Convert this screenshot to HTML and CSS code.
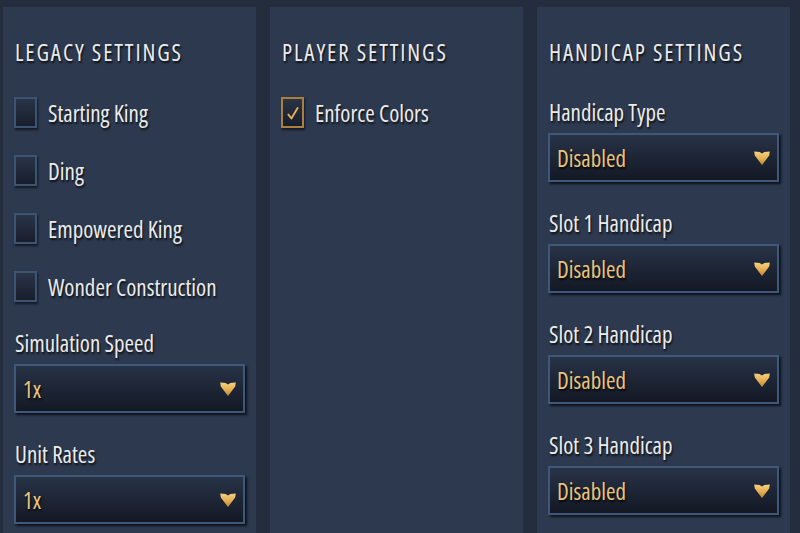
FILE: index.html
```html
<!DOCTYPE html>
<html>
<head>
<meta charset="utf-8">
<link rel="stylesheet" href="styles.css">
</head>
<body>
<svg class="defs" width="0" height="0" aria-hidden="true"><defs><linearGradient id="g1" x1="0" y1="0" x2="0" y2="1"><stop offset="0" stop-color="#f7d07c"/><stop offset="0.55" stop-color="#e2ad52"/><stop offset="1" stop-color="#c08634"/></linearGradient></defs></svg>
<div class="screen">
  <section class="panel">
    <h2 class="panel-title">LEGACY SETTINGS</h2>
    <div class="options">
      <div class="check"><span class="box"></span><span class="check-label">Starting King</span></div>
      <div class="check"><span class="box"></span><span class="check-label">Ding</span></div>
      <div class="check"><span class="box"></span><span class="check-label">Empowered King</span></div>
      <div class="check"><span class="box"></span><span class="check-label">Wonder Construction</span></div>
    </div>
    <div class="fields after-options">
      <div class="field">
        <div class="field-label">Simulation Speed</div>
        <div class="select"><span class="select-value">1x</span><svg class="arrow" viewBox="0 0 16 14"><path d="M0.2 0.6 L5.6 1.1 L8 2.6 L10.4 1.1 L15.8 0.6 L15.2 4.6 L8 14 L0.8 4.6 Z" fill="url(#g1)"/></svg></div>
      </div>
      <div class="field">
        <div class="field-label">Unit Rates</div>
        <div class="select"><span class="select-value">1x</span><svg class="arrow" viewBox="0 0 16 14"><path d="M0.2 0.6 L5.6 1.1 L8 2.6 L10.4 1.1 L15.8 0.6 L15.2 4.6 L8 14 L0.8 4.6 Z" fill="url(#g1)"/></svg></div>
      </div>
    </div>
  </section>

  <section class="panel">
    <h2 class="panel-title">PLAYER SETTINGS</h2>
    <div class="options">
      <div class="check"><span class="box checked"><svg class="tick" viewBox="0 0 12 14"><path d="M1.4 8.6 L4.4 12.4 L10.6 2" fill="none" stroke="#e3ae55" stroke-width="1.9" stroke-linecap="round" stroke-linejoin="round"/></svg></span><span class="check-label">Enforce Colors</span></div>
    </div>
  </section>

  <section class="panel">
    <h2 class="panel-title">HANDICAP SETTINGS</h2>
    <div class="fields">
      <div class="field">
        <div class="field-label">Handicap Type</div>
        <div class="select"><span class="select-value">Disabled</span><svg class="arrow" viewBox="0 0 16 14"><path d="M0.2 0.6 L5.6 1.1 L8 2.6 L10.4 1.1 L15.8 0.6 L15.2 4.6 L8 14 L0.8 4.6 Z" fill="url(#g1)"/></svg></div>
      </div>
      <div class="field">
        <div class="field-label">Slot 1 Handicap</div>
        <div class="select"><span class="select-value">Disabled</span><svg class="arrow" viewBox="0 0 16 14"><path d="M0.2 0.6 L5.6 1.1 L8 2.6 L10.4 1.1 L15.8 0.6 L15.2 4.6 L8 14 L0.8 4.6 Z" fill="url(#g1)"/></svg></div>
      </div>
      <div class="field">
        <div class="field-label">Slot 2 Handicap</div>
        <div class="select"><span class="select-value">Disabled</span><svg class="arrow" viewBox="0 0 16 14"><path d="M0.2 0.6 L5.6 1.1 L8 2.6 L10.4 1.1 L15.8 0.6 L15.2 4.6 L8 14 L0.8 4.6 Z" fill="url(#g1)"/></svg></div>
      </div>
      <div class="field">
        <div class="field-label">Slot 3 Handicap</div>
        <div class="select"><span class="select-value">Disabled</span><svg class="arrow" viewBox="0 0 16 14"><path d="M0.2 0.6 L5.6 1.1 L8 2.6 L10.4 1.1 L15.8 0.6 L15.2 4.6 L8 14 L0.8 4.6 Z" fill="url(#g1)"/></svg></div>
      </div>
    </div>
  </section>
</div>
</body>
</html>
```
FILE: styles.css
```css
html, body {
  margin: 0;
  height: 100%;
  overflow: hidden;
}
body {
  background: #232d3e;
  font-family: "Open Sans", "DejaVu Sans", sans-serif;
  font-stretch: 77%;
  font-size: 23px;
  color: #ebebeb;
}
.defs {
  position: absolute;
  width: 0;
  height: 0;
}
.screen {
  display: flex;
  gap: 14px;
  padding: 7px 0 0 3px;
  height: 100%;
  box-sizing: border-box;
}
.panel {
  width: 253px;
  flex: none;
  background: #2c394e;
  padding: 30px 11px 0;
  box-sizing: border-box;
}
.panel-title {
  margin: 0 0 30px 1px;
  font-size: 23px;
  font-weight: 400;
  line-height: 30px;
  letter-spacing: 1.9px;
  white-space: nowrap;
  text-shadow: 1px 2px 2px rgba(0, 0, 0, 0.75);
}
.options {
  display: flex;
  flex-direction: column;
  gap: 27px;
}
.check {
  display: flex;
  align-items: center;
  gap: 11px;
  height: 31px;
}
.box {
  width: 23px;
  height: 31px;
  box-sizing: border-box;
  border: 2px solid #3d5372;
  background: linear-gradient(#2a3448, #171d2b);
  box-shadow: 1px 2px 2px rgba(8, 12, 20, 0.7);
  display: flex;
  align-items: center;
  justify-content: center;
  flex: none;
}
.box.checked {
  border-color: #a98040;
}
.tick {
  width: 12px;
  height: 14px;
  margin-top: 1px;
}
.check-label {
  line-height: 30px;
  white-space: nowrap;
  text-shadow: 1px 2px 2px rgba(0, 0, 0, 0.75);
}
.fields {
  display: flex;
  flex-direction: column;
  gap: 26px;
}
.fields.after-options {
  margin-top: 26px;
}
.field-label {
  line-height: 30px;
  margin: 0 0 6px 1px;
  white-space: nowrap;
  text-shadow: 1px 2px 2px rgba(0, 0, 0, 0.75);
}
.select {
  height: 49px;
  box-sizing: border-box;
  border: 2px solid #3f5778;
  background: linear-gradient(#283347, #131824);
  box-shadow: 2px 2px 2px rgba(6, 9, 16, 0.8);
  display: flex;
  align-items: center;
  justify-content: space-between;
  padding: 0 7px 0 7px;
}
.select-value {
  color: #e8c47c;
  line-height: 30px;
  text-shadow: 1px 2px 2px rgba(0, 0, 0, 0.8);
}
.arrow {
  width: 16px;
  height: 14px;
  flex: none;
}
```
